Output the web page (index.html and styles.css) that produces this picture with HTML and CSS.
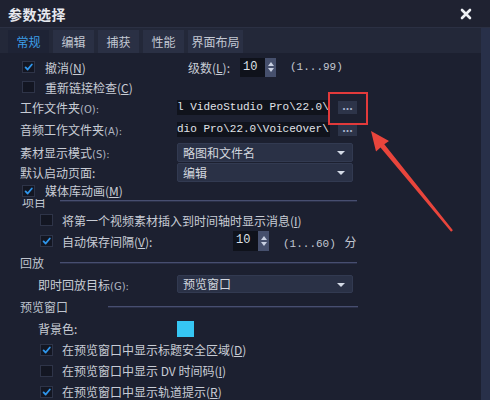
FILE: index.html
```html
<!DOCTYPE html>
<html lang="zh-CN">
<head>
  <meta charset="UTF-8">
  <title>参数选择</title>
  <link rel="stylesheet" href="styles.css">
</head>
<body>
  <div class="dialog">
    <div class="titlebar">
      <span class="title">参数选择</span>
      <svg class="close" width="12" height="12" viewBox="0 0 12 12">
        <path d="M2 2 L10 10 M10 2 L2 10" stroke="#eef0f4" stroke-width="2.6" stroke-linecap="round"/>
      </svg>
    </div>

    <div class="body">
      <div class="tabs">
        <span class="tab active">常规</span>
        <span class="tab">编辑</span>
        <span class="tab">捕获</span>
        <span class="tab">性能</span>
        <span class="tab wide">界面布局</span>
      </div>

      <div class="panel">
        <!-- 撤消 / 级数 -->
        <div class="row r1 pad-check">
          <span class="check-item undo">
            <span class="cb on"><svg viewBox="0 0 13 12"><path d="M3 6.5 L5.5 9 L10.5 3"/></svg></span>
            <span class="cb-text">撤消(<u>N</u>)</span>
          </span>
          <span>级数(<u>L</u>):</span>
          <span class="spin first">
            <span class="num">10</span>
            <span class="arrows"><i class="up"></i><i class="down"></i></span>
          </span>
          <span class="range">(1...99)</span>
        </div>

        <div class="row r2 pad-check">
          <span class="check-item">
            <span class="cb"></span>
            <span class="cb-text">重新链接检查(<u>C</u>)</span>
          </span>
        </div>

        <div class="row r3 pad-label">
          <span class="label">工作文件夹<span class="key">(O):</span></span>
          <span class="path">l VideoStudio Pro\22.0\</span>
          <span class="browse">...</span>
        </div>

        <div class="row r4 pad-label">
          <span class="label">音频工作文件夹<span class="key">(A):</span></span>
          <span class="path">dio Pro\22.0\VoiceOver\</span>
          <span class="browse">...</span>
        </div>

        <div class="row r5 pad-label">
          <span class="label">素材显示模式<span class="key">(S):</span></span>
          <span class="select">略图和文件名</span>
        </div>

        <div class="row r6 pad-label">
          <span class="label">默认启动页面:</span>
          <span class="select">编辑</span>
        </div>

        <div class="row r7 pad-check cover">
          <span class="check-item">
            <span class="cb on"><svg viewBox="0 0 13 12"><path d="M3 6.5 L5.5 9 L10.5 3"/></svg></span>
            <span class="cb-text">媒体库动画(<u>M</u>)</span>
          </span>
        </div>

        <div class="group g-project">
          <span class="group-name">项目</span>
          <span class="line"></span>
        </div>

        <div class="row r8 pad-sub">
          <span class="check-item">
            <span class="cb"></span>
            <span class="cb-text">将第一个视频素材插入到时间轴时显示消息(<u>I</u>)</span>
          </span>
        </div>

        <div class="row r9 pad-sub">
          <span class="check-item autosave">
            <span class="cb on"><svg viewBox="0 0 13 12"><path d="M3 6.5 L5.5 9 L10.5 3"/></svg></span>
            <span class="cb-text">自动保存间隔(<u>V</u>):</span>
          </span>
          <span class="spin">
            <span class="num">10</span>
            <span class="arrows"><i class="up"></i><i class="down"></i></span>
          </span>
          <span class="range">(1...60) <span class="unit">分</span></span>
        </div>

        <div class="group g-play">
          <span class="group-name">回放</span>
          <span class="line"></span>
        </div>

        <div class="row r11 pad-indent">
          <span class="label">即时回放目标<span class="key">(G):</span></span>
          <span class="select short">预览窗口</span>
        </div>

        <div class="group g-preview">
          <span class="group-name">预览窗口</span>
          <span class="line"></span>
        </div>

        <div class="row r13 pad-indent">
          <span class="label">背景色:</span>
          <span class="swatch"></span>
        </div>

        <div class="row r14 pad-sub">
          <span class="check-item">
            <span class="cb on"><svg viewBox="0 0 13 12"><path d="M3 6.5 L5.5 9 L10.5 3"/></svg></span>
            <span class="cb-text">在预览窗口中显示标题安全区域(<u>D</u>)</span>
          </span>
        </div>

        <div class="row r15 pad-sub">
          <span class="check-item">
            <span class="cb"></span>
            <span class="cb-text">在预览窗口中显示 DV 时间码(<u>I</u>)</span>
          </span>
        </div>

        <div class="row r16 pad-sub">
          <span class="check-item">
            <span class="cb on"><svg viewBox="0 0 13 12"><path d="M3 6.5 L5.5 9 L10.5 3"/></svg></span>
            <span class="cb-text">在预览窗口中显示轨道提示(<u>R</u>)</span>
          </span>
        </div>
      </div>
    </div>

    <!-- annotation -->
    <div class="mark-box"></div>
    <svg class="arrow" width="490" height="400" viewBox="0 0 490 400">
      <polygon points="371,131 389,141 384.3,144.3 452.9,230.2 451.1,231.8 380.5,147.5 376,151.5" fill="#e8453c"/>
    </svg>
  </div>
</body>
</html>
```

FILE: styles.css
```css
body {
  margin: 0;
  background: #1c2030;
  font-family: "Noto Sans CJK SC", "Noto Sans", sans-serif;
  font-size: 12px;
  color: #c8ccd5;
}
.dialog {
  position: relative;
  width: 490px;
  height: 400px;
  overflow: hidden;
  display: flex;
  flex-direction: column;
  background: #1c2030;
}
.titlebar {
  flex: none;
  height: 27px;
  display: flex;
  align-items: center;
  justify-content: space-between;
  padding: 0 18px 0 8px;
  background: #1f2231;
  border-bottom: 1px solid #2b3043;
}
.title {
  font-size: 14px;
  font-weight: bold;
  color: #e6e8ee;
  letter-spacing: 0.5px;
}
.body {
  flex: 1;
  display: flex;
  flex-direction: column;
  border-right: 9px solid #283049;
}
/* tabs */
.tabs {
  flex: none;
  height: 25px;
  display: flex;
  align-items: flex-end;
  gap: 4px;
  padding-left: 8px;
  background: #232839;
}
.tab {
  width: 41px;
  height: 23px;
  line-height: 23px;
  text-align: center;
  background: #2a3044;
  color: #c3c8d3;
}
.tab.wide { width: 55px; }
.tab.active {
  background: #1e2335;
  color: #3c9ee8;
}
/* panel */
.panel {
  flex: 1;
  padding-top: 4px;
  background: #1c2030;
}
.row {
  display: flex;
  align-items: center;
  height: 21px;
  white-space: nowrap;
}
.pad-check { padding-left: 22px; }
.pad-label { padding-left: 20px; }
.pad-sub { padding-left: 40px; }
.pad-indent { padding-left: 38px; }
.label { width: 157px; flex: none; }
.pad-indent .label { width: 139px; }
.key {
  font-family: "DejaVu Sans", sans-serif;
  font-size: 10px;
  color: #aeb4c0;
}
.r1 { height: 20px; }
.r2 { height: 20px; }
.r3 { height: 21px; }
.r4 { height: 23px; margin-bottom: 1px; }
.r5 { height: 20px; }
.r6 { height: 20px; }
.r7 { height: 17px; }
.cover {
  position: relative;
  z-index: 1;
  background: #1c2030;
}
.r8 { height: 20px; }
.r9 { height: 22px; }
.r11 { height: 22px; }
.r13 { height: 21px; }
/* checkbox */
.check-item {
  display: flex;
  align-items: center;
}
.check-item.undo { width: 166px; }
.check-item.autosave { width: 193px; }
.cb {
  width: 13px;
  height: 12px;
  box-sizing: border-box;
  border: 1px solid #2e3448;
  background: #131622;
  flex: none;
}
.cb svg {
  display: block;
  width: 11px;
  height: 10px;
}
.cb svg path {
  fill: none;
  stroke: #2f96ec;
  stroke-width: 2.2;
  stroke-linecap: round;
  stroke-linejoin: round;
}
.cb-text { margin-left: 10px; }
.pad-sub .cb-text { margin-left: 9px; }
u { text-decoration-thickness: 1px; text-underline-offset: 1px; }
/* spin box */
.spin {
  display: flex;
  height: 19px;
  margin-left: 10px;
}
.pad-sub .spin { margin-left: 0; height: 20px; }
.spin .num {
  width: 22px;
  padding-left: 3px;
  background: #0f121b;
  font-family: "Liberation Mono", monospace;
  font-size: 12px;
  line-height: 19px;
  color: #dde0e6;
}
.spin .arrows {
  width: 11px;
  background: #46506d;
  display: flex;
  flex-direction: column;
  align-items: center;
  justify-content: center;
  gap: 2px;
}
.spin i {
  width: 0;
  height: 0;
  border-left: 3.5px solid transparent;
  border-right: 3.5px solid transparent;
}
.spin i.up { border-bottom: 4px solid #c9d1e2; }
.spin i.down { border-top: 4px solid #c9d1e2; }
.range {
  margin-left: 14px;
  font-family: "Liberation Mono", monospace;
  font-size: 11px;
  color: #c3c8d2;
}
.unit {
  font-family: "Noto Sans CJK SC", sans-serif;
  font-size: 12px;
  margin-left: 2px;
}
/* path inputs */
.path {
  width: 153px;
  height: 15px;
  line-height: 15px;
  overflow: hidden;
  background: #10131c;
  font-family: "Liberation Mono", monospace;
  font-size: 11px;
  color: #e0e3e9;
}
.browse {
  margin-left: 8px;
  width: 19px;
  height: 13px;
  line-height: 9px;
  text-align: center;
  background: #2d3449;
  color: #a9b6cf;
  font-weight: bold;
  font-size: 11px;
}
/* dropdowns */
.select {
  position: relative;
  width: 176px;
  height: 19px;
  line-height: 17px;
  box-sizing: border-box;
  padding-left: 5px;
  background: #2a3146;
  border: 1px solid #323a51;
  border-radius: 2px;
  color: #d3d7df;
}
.select.short { height: 18px; line-height: 16px; }
.select::after {
  content: "";
  position: absolute;
  right: 7px;
  top: 7px;
  border-left: 4px solid transparent;
  border-right: 4px solid transparent;
  border-top: 4px solid #d4dae6;
}
/* group headings */
.group {
  display: flex;
  align-items: center;
  height: 21px;
  padding-left: 20px;
  padding-right: 124px;
  color: #bfc4ce;
}
.group-name { width: 40px; flex: none; }
.group .line {
  flex: 1;
  height: 0;
  border-top: 1px solid #474e70;
  border-bottom: 1px solid #2a2f47;
}
.g-project {
  height: 20px;
  margin-top: -8px;
  margin-bottom: -1px;
  padding-left: 22px;
}
.g-project .group-name { width: 38px; }
.g-preview { height: 23px; padding-right: 123px; }
.g-preview .group-name { width: 88px; }
.swatch {
  width: 17px;
  height: 16px;
  background: #36c6f3;
}
/* red annotation */
.mark-box {
  position: absolute;
  z-index: 2;
  left: 328px;
  top: 92px;
  width: 40px;
  height: 33px;
  box-sizing: border-box;
  border: 2px solid #e23a3b;
}
.arrow {
  position: absolute;
  z-index: 2;
  left: 0;
  top: 0;
  pointer-events: none;
}
```
